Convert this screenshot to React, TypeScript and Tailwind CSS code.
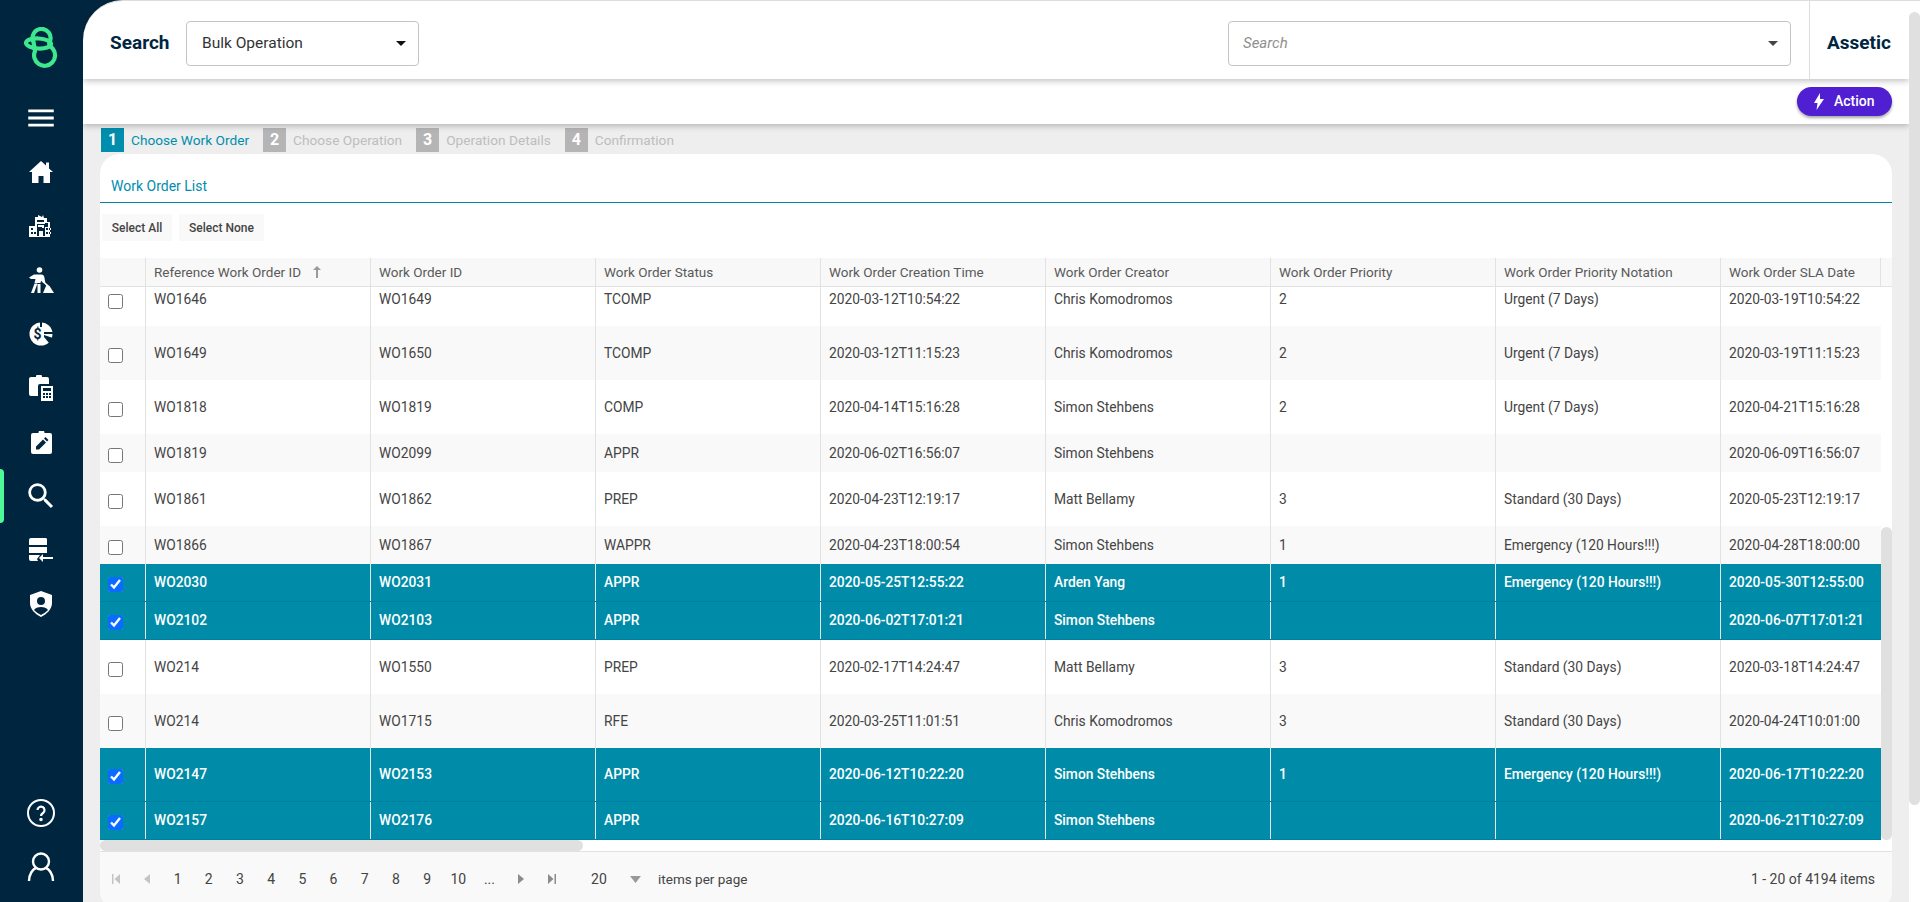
import React from 'react';
import { MdMenu, MdSearch } from 'react-icons/md';

type Row = {
    ref: string;
    id: string;
    status: string;
    created: string;
    creator: string;
    priority: string;
    notation: string;
    sla: string;
    tall?: boolean;
    selected?: boolean;
};

const rows: Row[] = [
    { ref: 'WO1646', id: 'WO1649', status: 'TCOMP', created: '2020-03-12T10:54:22', creator: 'Chris Komodromos', priority: '2', notation: 'Urgent (7 Days)', sla: '2020-03-19T10:54:22', tall: true },
    { ref: 'WO1649', id: 'WO1650', status: 'TCOMP', created: '2020-03-12T11:15:23', creator: 'Chris Komodromos', priority: '2', notation: 'Urgent (7 Days)', sla: '2020-03-19T11:15:23', tall: true },
    { ref: 'WO1818', id: 'WO1819', status: 'COMP', created: '2020-04-14T15:16:28', creator: 'Simon Stehbens', priority: '2', notation: 'Urgent (7 Days)', sla: '2020-04-21T15:16:28', tall: true },
    { ref: 'WO1819', id: 'WO2099', status: 'APPR', created: '2020-06-02T16:56:07', creator: 'Simon Stehbens', priority: '', notation: '', sla: '2020-06-09T16:56:07' },
    { ref: 'WO1861', id: 'WO1862', status: 'PREP', created: '2020-04-23T12:19:17', creator: 'Matt Bellamy', priority: '3', notation: 'Standard (30 Days)', sla: '2020-05-23T12:19:17', tall: true },
    { ref: 'WO1866', id: 'WO1867', status: 'WAPPR', created: '2020-04-23T18:00:54', creator: 'Simon Stehbens', priority: '1', notation: 'Emergency (120 Hours!!!)', sla: '2020-04-28T18:00:00' },
    { ref: 'WO2030', id: 'WO2031', status: 'APPR', created: '2020-05-25T12:55:22', creator: 'Arden Yang', priority: '1', notation: 'Emergency (120 Hours!!!)', sla: '2020-05-30T12:55:00', selected: true },
    { ref: 'WO2102', id: 'WO2103', status: 'APPR', created: '2020-06-02T17:01:21', creator: 'Simon Stehbens', priority: '', notation: '', sla: '2020-06-07T17:01:21', selected: true },
    { ref: 'WO214', id: 'WO1550', status: 'PREP', created: '2020-02-17T14:24:47', creator: 'Matt Bellamy', priority: '3', notation: 'Standard (30 Days)', sla: '2020-03-18T14:24:47', tall: true },
    { ref: 'WO214', id: 'WO1715', status: 'RFE', created: '2020-03-25T11:01:51', creator: 'Chris Komodromos', priority: '3', notation: 'Standard (30 Days)', sla: '2020-04-24T10:01:00', tall: true },
    { ref: 'WO2147', id: 'WO2153', status: 'APPR', created: '2020-06-12T10:22:20', creator: 'Simon Stehbens', priority: '1', notation: 'Emergency (120 Hours!!!)', sla: '2020-06-17T10:22:20', tall: true, selected: true },
    { ref: 'WO2157', id: 'WO2176', status: 'APPR', created: '2020-06-16T10:27:09', creator: 'Simon Stehbens', priority: '', notation: '', sla: '2020-06-21T10:27:09', selected: true },
];

const headers = ['Work Order ID', 'Work Order Status', 'Work Order Creation Time', 'Work Order Creator', 'Work Order Priority', 'Work Order Priority Notation', 'Work Order SLA Date'];

const Logo = () => (
    <svg width="36" height="42" viewBox="0 0 36 42" fill="none" stroke="#3de88f" strokeWidth="4.200">
        <path d="M11 24A10.500 10.500 0 1 0 29 22C26 19 24 17.500 26 14A9 9 0 1 0 9.500 15C10 18 10.500 21 11 24Z" />
        <ellipse cx="14.500" cy="16.500" rx="12.500" ry="5" transform="rotate(3 14.500 16.500)" />
    </svg>
);

const HomeIcon = () => (
    <svg width="24" height="22" viewBox="0 0 24 22" fill="white">
        <path d="M12 0l5 4.500V1.500h3v6l4 3.500h-3v11h-6.500v-7h-5v7H3V11H0z" />
    </svg>
);

const BuildingIcon = () => (
    <svg width="24" height="24" viewBox="0 0 24 24" fill="white">
        <path d="M6 3h3V1l2 1 2 1 1-2 1 3h3v5h-3V6H8v4H6z" />
        <path d="M8 8h8v2H8zM9 11h6v3h-2v-1H9z" />
        <path fillRule="evenodd" d="M0 12h6V9h2v13h2v-5h4v5h2V13h3V9h-1v-1h3v15H0zm2 2v2h2v-2zm0 4v2h2v-2zm18-4v2h2v-2zm0 4v2h2v-2zm-3 0v2h2v-2zm0-4v2h2v-2zM7 18H5v2h2z" />
    </svg>
);

const WorkerIcon = () => (
    <svg width="25" height="26" viewBox="0 0 25 26" fill="white">
        <circle cx="10.500" cy="3" r="2.800" />
        <path d="M0 10.500L5 7.500h7.500c1.500 0 2.500 1 2.800 2.500l1 5.500-2.300.5-1.500-4.500-1 4.500H5.500L6.500 12 2 12z" />
        <path d="M5.500 16.500h3L5 26H2zM8.500 17h3v9h-3z" />
        <path d="M14 26l3-7 1-1.500 2.500 1.500 4.500 7z" />
        <path d="M11 10.500l8.500 8-1 1.200-8.500-8z" />
    </svg>
);

const DollarIcon = () => (
    <svg width="24" height="24" viewBox="0 0 24 24">
        <circle cx="12" cy="12" r="11.500" fill="white" />
        <path d="M11 0h2v5h-2zM15 10h9v2h-9zM15 13l9 3v5l-4 0-5-6z" fill="#00263f" />
        <text x="8.500" y="17" fontSize="14" fontWeight="700" textAnchor="middle" fontFamily="Roboto, sans-serif" fill="#00263f">$</text>
    </svg>
);

const ClipCalcIcon = () => (
    <svg width="25" height="26" viewBox="0 0 25 26" fill="white">
        <path d="M2 2h5a3 3 0 0 1 6 0h5a2 2 0 0 1 2 2v5h-9a2 2 0 0 0-2 2v10H2a2 2 0 0 1-2-2V4a2 2 0 0 1 2-2z" />
        <path fillRule="evenodd" d="M12 11h12v15H12zm2 2v3h8v-3zm0 5v2h2v-2zm3 0v2h2v-2zm3 0v2h2v-2zm-6 3v2h2v-2zm3 0v2h2v-2zm3 0v2h2v-2z" />
    </svg>
);

const ClipEditIcon = () => (
    <svg width="21" height="23" viewBox="0 0 21 23">
        <path d="M2 2h5.500a3 3 0 0 1 6 0H19a2 2 0 0 1 2 2v17a2 2 0 0 1-2 2H2a2 2 0 0 1-2-2V4a2 2 0 0 1 2-2z" fill="white" />
        <path d="M5 18.500v-3L12 8.500l3 3L8 18.500zM13 7.500l1.500-1.500 3 3L16 10.500z" fill="#00263f" />
    </svg>
);

const ServerIcon = () => (
    <svg width="24" height="24" viewBox="0 0 24 24" fill="white">
        <path d="M2 0h15a2 2 0 0 1 1 1v6H0V2a2 2 0 0 1 2-2zM0 9h18v6H0zM0 17h11l-3 4 1 2H2a2 2 0 0 1-2-2z" />
        <path d="M14 16v3h10v2H14v3l-4-4z" />
    </svg>
);

const ShieldIcon = () => (
    <svg width="22" height="26" viewBox="0 0 22 26" fill="white">
        <path fillRule="evenodd" d="M11 0l11 4v8c0 6-5 11-11 14C5 23 0 18 0 12V4zm0 6a4 4 0 1 0 0 8 4 4 0 0 0 0-8zm0 10c-3 0-6 1-7 3 2 2 5 4 7 5 2-1 5-3 7-5-1-2-4-3-7-3z" />
    </svg>
);

const NavItem: React.FC<{ active?: boolean; children: React.ReactNode }> = ({ active, children }) => (
    <div className="relative h-[54px] flex items-center justify-center pr-[1px]">
        {active && <div className="absolute left-0 top-0 w-[4px] h-[54px] rounded-r-sm bg-[#4dfa9a]" />}
        {children}
    </div>
);

const Sidebar = () => (
    <div className="w-[83px] shrink-0 bg-[#00263f] flex flex-col pb-[8px]">
        <div className="h-[91px] pt-[27px] flex justify-center"><Logo /></div>
        <NavItem><MdMenu size={34} color="white" /></NavItem>
        <NavItem><HomeIcon /></NavItem>
        <NavItem><BuildingIcon /></NavItem>
        <NavItem><WorkerIcon /></NavItem>
        <NavItem><DollarIcon /></NavItem>
        <NavItem><ClipCalcIcon /></NavItem>
        <NavItem><ClipEditIcon /></NavItem>
        <NavItem active><MdSearch size={34} color="white" /></NavItem>
        <NavItem><ServerIcon /></NavItem>
        <NavItem><ShieldIcon /></NavItem>
        <div className="mt-auto">
            <NavItem>
                <svg width="28" height="28" viewBox="0 0 28 28" fill="none" stroke="white" strokeWidth="2">
                    <circle cx="14" cy="14" r="13" />
                    <path d="M10.500 11a3.500 3.500 0 1 1 5.500 3c-1.500 1-2 1.500-2 3" strokeWidth="2.200" />
                    <circle cx="14" cy="20.500" r="0.800" fill="white" />
                </svg>
            </NavItem>
            <NavItem>
                <svg width="28" height="30" viewBox="0 0 28 30" fill="none" stroke="white" strokeWidth="2.400">
                    <circle cx="14" cy="9.500" r="8" />
                    <path d="M2 29c0-7 4-12 7-13M26 29c0-7-4-12-7-13" />
                </svg>
            </NavItem>
        </div>
    </div>
);

const Caret: React.FC<{ color: string }> = ({ color }) => (
    <svg width="10" height="5" viewBox="0 0 10 5" className="shrink-0"><path d="M0 0h10L5 5z" fill={color} /></svg>
);

const Header = () => (
    <div className="bg-[#00263f]">
        <div className="h-[79px] bg-white rounded-tl-[40px] border-t border-[#dddddd] shadow-[0_2px_6px_rgba(0,0,0,0.25)] relative z-20 flex items-center">
            <div className="mt-[7px] pl-[27px] w-[103px] text-[19px] font-bold text-[#00263f]">Search</div>
            <div className="mt-[7px] w-[233px] h-[45px] border border-[#c4c4c4] rounded-[4px] flex items-center justify-between pl-[15px] pr-[12px] text-[15.500px] text-[#333333]">
                Bulk Operation
                <Caret color="#111111" />
            </div>
            <div className="mt-[7px] ml-[809px] w-[563px] h-[45px] border border-[#c4c4c4] rounded-[4px] flex items-center justify-between pl-[14px] pr-[12px] text-[15px] italic text-[#8f8f8f]">
                Search
                <Caret color="#444444" />
            </div>
            <div className="ml-[18px] h-full flex-1 border-l border-[#dddddd] pl-[17px] pt-[7px] flex items-center text-[19px] font-bold text-[#00263f]">Assetic</div>
        </div>
        <div className="h-[45px] bg-white shadow-[0_2px_6px_rgba(0,0,0,0.25)] relative z-10 flex items-start justify-end pt-[8px] pr-[17px]">
            <button className="w-[95px] h-[29px] rounded-full bg-[#4f1fd1] shadow-[0_2px_3px_rgba(0,0,0,0.35)] flex items-center pl-[17px] gap-[10px] text-[14px] font-medium text-white">
                <svg width="10" height="17" viewBox="0 0 10 17" fill="white"><path d="M6 0L0 10h3.500L2.500 17 10 6H6z" /></svg>
                Action
            </button>
        </div>
    </div>
);

const Step: React.FC<{ n: number; label: string; active?: boolean }> = ({ n, label, active }) => (
    <div className="flex items-center gap-[7px]">
        <div className={`w-[23px] h-[24px] flex items-center justify-center text-[16px] font-bold text-white ${active ? 'bg-[#008eac]' : 'bg-[#b5b5b5]'}`}>{n}</div>
        <span className={`text-[13.700px] ${active ? 'text-[#008eac]' : 'text-[#bdbdbd]'}`}>{label}</span>
    </div>
);

const GridRow = 'grid grid-cols-[45px_repeat(7,225px)_161px]';

const TableHead = () => (
    <div className={`${GridRow} h-[29px] bg-[#f8f8f8] border-b border-[#e2e2e2] text-[13.500px] text-[#5a5a5a]`}>
        <div />
        <div className="border-l border-[#e2e2e2] pl-[8px] flex items-center gap-[12px]">
            Reference Work Order ID
            <svg width="8" height="12" viewBox="0 0 8 12" fill="#9a9a9a"><path d="M4 0l4 4H5v8H3V4H0z" /></svg>
        </div>
        {headers.map((h, i) => (
            <div key={h} className={`border-l border-[#e2e2e2] pl-[8px] flex items-center ${i === headers.length - 1 ? 'border-r' : ''}`}>{h}</div>
        ))}
    </div>
);

const TableRow: React.FC<{ row: Row; stripe: boolean }> = ({ row, stripe }) => {
    const cells = [row.ref, row.id, row.status, row.created, row.creator, row.priority, row.notation, row.sla];
    const tone = row.selected
        ? 'bg-[#008ca8] text-white font-medium border-b border-[#0080a0]'
        : stripe ? 'bg-[#f9f9f9] text-[#444444]' : 'bg-white text-[#444444]';
    return (
        <div className={`${GridRow} ${row.tall ? 'h-[54px]' : 'h-[38px]'} text-[13.800px] ${tone}`}>
            <div className="flex items-center pl-[8px] pt-[4px]">
                <input type="checkbox" checked={!!row.selected} readOnly className="w-[15px] h-[15px] m-0 accent-[#0a6cff]" />
            </div>
            {cells.map((c, i) => (
                <div key={i} className={`flex items-center pl-[8px] border-l ${row.selected ? 'border-[#e6e6e6]' : 'border-[#e2e2e2]'}`}>{c}</div>
            ))}
        </div>
    );
};

const PagerIcon: React.FC<{ kind: 'first' | 'prev' | 'next' | 'last' }> = ({ kind }) => {
    const color = kind === 'first' || kind === 'prev' ? '#c4c4c4' : '#8c8c8c';
    return (
        <svg width="10" height="10" viewBox="0 0 10 10" fill={color}>
            {kind === 'first' && <path d="M1 0h1.500v10H1zM9 0v10L3.500 5z" />}
            {kind === 'prev' && <path d="M8 0v10L2 5z" />}
            {kind === 'next' && <path d="M2 0v10l6-5z" />}
            {kind === 'last' && <path d="M1 0v10l5.500-5zM7.500 0H9v10H7.500z" />}
        </svg>
    );
};

const Pager = () => (
    <div className="flex-1 bg-[#f9f9f9] border-t border-[#e2e2e2] flex items-start pt-[18px] text-[14px] text-[#444444]">
        <div className="flex items-center h-[18px]">
            <div className="w-[31px] flex justify-center"><PagerIcon kind="first" /></div>
            <div className="w-[31px] flex justify-center"><PagerIcon kind="prev" /></div>
            {['1', '2', '3', '4', '5', '6', '7', '8', '9', '10', '...'].map(p => (
                <div key={p} className="w-[31.200px] text-center">{p}</div>
            ))}
            <div className="w-[31px] flex justify-center"><PagerIcon kind="next" /></div>
            <div className="w-[31px] flex justify-center"><PagerIcon kind="last" /></div>
        </div>
        <div className="ml-[24px] h-[18px] flex items-center w-[50px] justify-between">
            20
            <svg width="11" height="7" viewBox="0 0 11 7"><path d="M0 0h11L5.500 7z" fill="#9a9a9a" /></svg>
        </div>
        <div className="ml-[17px] h-[18px] flex items-center text-[13.500px]">items per page</div>
        <div className="ml-auto pr-[17px] h-[18px] flex items-center">1 - 20 of 4194 items</div>
    </div>
);

const Card = () => (
    <div className="h-[756px] bg-white rounded-[20px] overflow-hidden flex flex-col">
        <div className="h-[49px] border-b border-[#0086a4] pl-[11px] pt-[23px] text-[14px] leading-[18px] text-[#008eac] shrink-0">Work Order List</div>
        <div className="flex gap-[7px] pl-[2px] pt-[11px] h-[55px] shrink-0">
            <button className="w-[70px] h-[27px] bg-[#f9f9f9] text-[12px] font-medium text-[#444444]">Select All</button>
            <button className="w-[85px] h-[27px] bg-[#f9f9f9] text-[12px] font-medium text-[#444444]">Select None</button>
        </div>
        <div className="bg-[#f8f8f8] shrink-0"><TableHead /></div>
        <div className="h-[553px] flex shrink-0 overflow-hidden">
            <div className="flex-1 overflow-hidden">
                <div className="-mt-[15px]">
                    {rows.map((r, i) => <TableRow key={r.ref + r.id} row={r} stripe={i % 2 === 1} />)}
                </div>
            </div>
            <div className="w-[11px] shrink-0 pt-[240px]">
                <div className="h-[313px] rounded-full bg-[#e0e0e0]" />
            </div>
        </div>
        <div className="h-[11px] shrink-0">
            <div className="w-[483px] h-[11px] rounded-full bg-[#e0e0e0]" />
        </div>
        <Pager />
    </div>
);

const App: React.FC = () => (
    <div className="h-[902px] w-full overflow-hidden flex [font-family:Roboto,sans-serif]">
        <Sidebar />
        <div className="flex-1 min-w-0 flex flex-col bg-[#eeeeee] overflow-hidden">
            <Header />
            <div className="px-[17px] pt-[4px]">
                <div className="flex gap-[14px] pl-[1px] h-[26px] items-start">
                    <Step n={1} label="Choose Work Order" active />
                    <Step n={2} label="Choose Operation" />
                    <Step n={3} label="Operation Details" />
                    <Step n={4} label="Confirmation" />
                </div>
                <Card />
            </div>
        </div>
        <div className="w-[11px] shrink-0 bg-white border-t border-[#dddddd] pt-[11px]">
            <div className="h-[793px] rounded-full bg-[#e0e0e0]" />
        </div>
    </div>
);

export default App;
